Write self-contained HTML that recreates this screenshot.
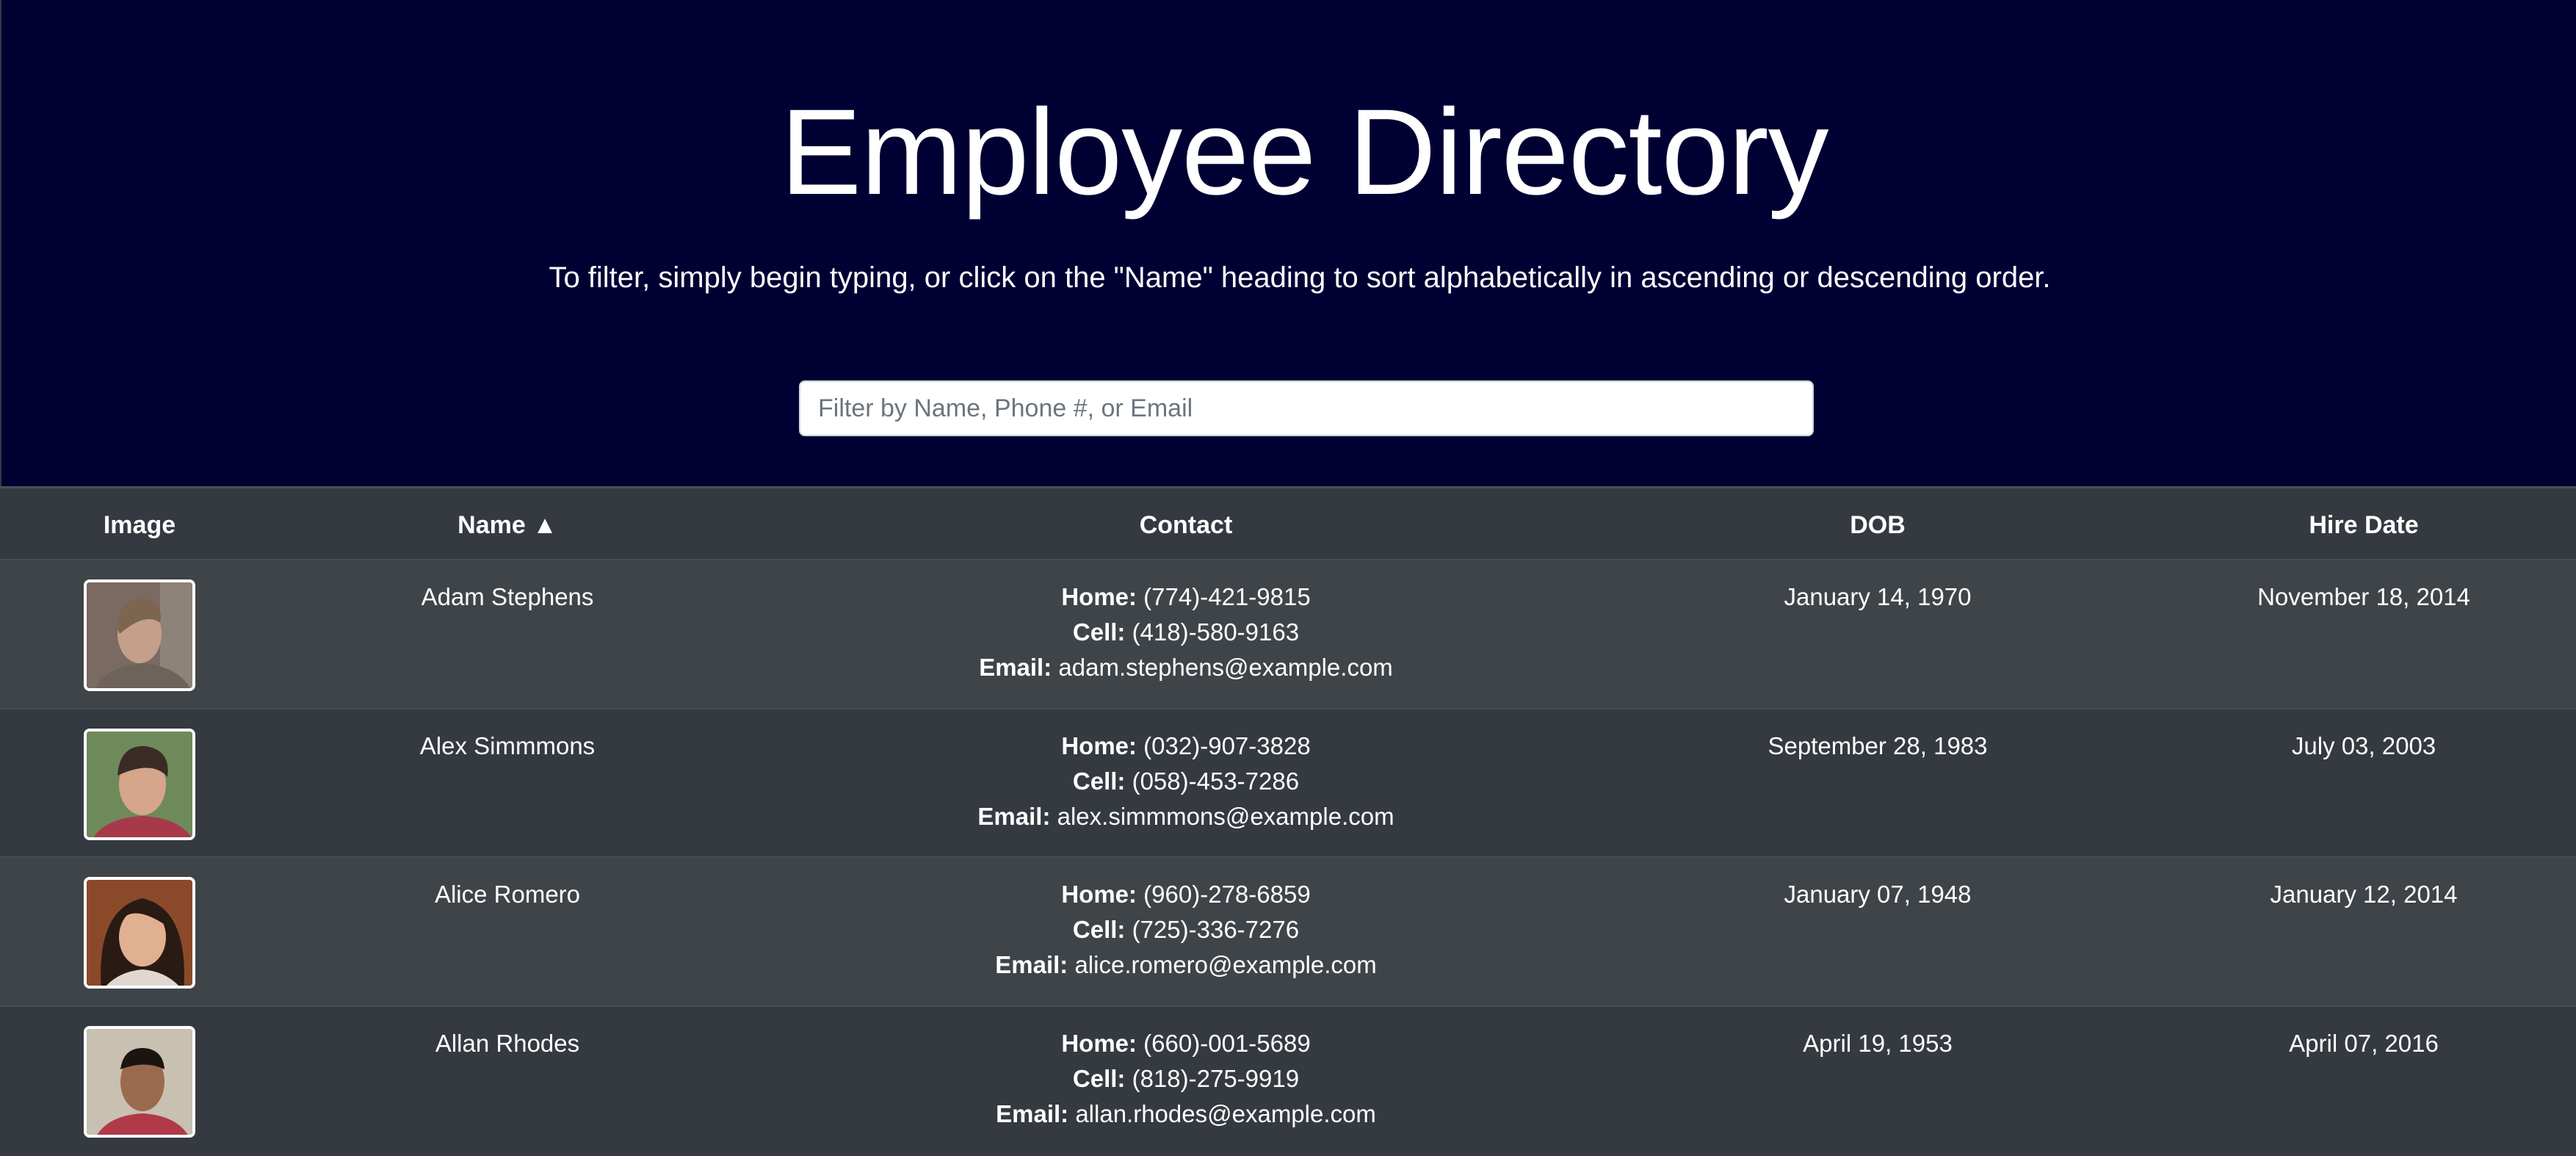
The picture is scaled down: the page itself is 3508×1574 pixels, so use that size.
<!DOCTYPE html>
<html><head><meta charset="utf-8">
<style>
*{margin:0;padding:0;box-sizing:border-box}
html,body{width:3508px;height:1574px;overflow:hidden;background:#343a40;font-family:"Liberation Sans",sans-serif;color:#fff}
.hdr{position:absolute;left:0;top:0;width:3508px;height:662px;background:#000033;border-left:2px solid #333a40}
h1{position:absolute;top:100px;left:20px;width:3508px;text-align:center;font-size:166px;font-weight:normal;line-height:216px;letter-spacing:-1.2px}
.sub{position:absolute;top:350px;left:14px;width:3508px;text-align:center;font-size:40px;line-height:56px}
.inp{position:absolute;left:1086px;top:518px;width:1382px;height:76px;background:#fff;border:2px solid #ced4da;border-radius:8px;color:#6c757d;font-size:34px;line-height:72px;padding-left:24px}
.row{position:absolute;left:0;width:3508px;border-top:2px solid #454d55}
.c{position:absolute;width:1000px;text-align:center;font-size:33px;line-height:48px}
.th{font-weight:bold;font-size:34px}
b{font-weight:bold}
.img{position:absolute;left:114px;width:152px;height:152px;border:4px solid #fff;border-radius:8px;overflow:hidden}
</style></head><body>
<div class="hdr">
<h1>Employee Directory</h1>
<div class="sub">To filter, simply begin typing, or click on the "Name" heading to sort alphabetically in ascending or descending order.</div>
<div class="inp">Filter by Name, Phone #, or Email</div>
</div>
<div class="row" style="top:662px;height:99px;background:#343a40;border-top:3px solid #4a4e55">
<div class="c th" style="left:-310px;top:26px">Image</div>
<div class="c th" style="left:191px;top:26px">Name ▲</div>
<div class="c th" style="left:1115px;top:26px">Contact</div>
<div class="c th" style="left:2057px;top:26px">DOB</div>
<div class="c th" style="left:2719px;top:26px">Hire Date</div>
</div>

<div class="row" style="top:761px;height:203px;background:#3f4449">
<div class="img" style="top:26px"><svg width="152" height="152"><rect width="152" height="152" fill="#7a6a62"/><rect x="100" width="52" height="152" fill="#8d8378"/><path d="M10 152 Q20 115 76 110 Q130 115 145 152Z" fill="#6e635a"/><ellipse cx="72" cy="70" rx="30" ry="40" fill="#c4a08a"/><path d="M40 60 Q45 20 80 22 Q105 28 100 55 Q80 40 45 70Z" fill="#7d6650"/></svg></div>
<div class="c" style="left:191px;top:26px">Adam Stephens</div>
<div class="c" style="left:1115px;top:26px"><b>Home:</b> (774)-421-9815<br><b>Cell:</b> (418)-580-9163<br><b>Email:</b> adam.stephens@example.com</div>
<div class="c" style="left:2057px;top:26px">January 14, 1970</div>
<div class="c" style="left:2719px;top:26px">November 18, 2014</div>
</div>

<div class="row" style="top:964px;height:202px;background:#343a40">
<div class="img" style="top:26px"><svg width="152" height="152"><rect width="152" height="152" fill="#6f8a5a"/><path d="M5 152 Q20 118 76 115 Q132 118 147 152Z" fill="#a63a4a"/><ellipse cx="76" cy="72" rx="32" ry="42" fill="#d5a58c"/><path d="M42 60 Q45 18 80 20 Q115 25 110 62 Q90 38 42 60Z" fill="#3a2c25"/></svg></div>
<div class="c" style="left:191px;top:26px">Alex Simmmons</div>
<div class="c" style="left:1115px;top:26px"><b>Home:</b> (032)-907-3828<br><b>Cell:</b> (058)-453-7286<br><b>Email:</b> alex.simmmons@example.com</div>
<div class="c" style="left:2057px;top:26px">September 28, 1983</div>
<div class="c" style="left:2719px;top:26px">July 03, 2003</div>
</div>

<div class="row" style="top:1166px;height:203px;background:#3f4449">
<div class="img" style="top:26px"><svg width="152" height="152"><rect width="152" height="152" fill="#8a4a2a"/><path d="M20 152 Q12 40 76 25 Q140 40 132 152Z" fill="#2a1a14"/><path d="M20 152 Q40 125 76 122 Q112 125 132 152Z" fill="#e0d8d0"/><ellipse cx="76" cy="78" rx="32" ry="40" fill="#e0b090"/><path d="M44 60 Q60 30 108 62 Q100 30 76 30 Q48 32 44 60Z" fill="#2a1a14"/></svg></div>
<div class="c" style="left:191px;top:26px">Alice Romero</div>
<div class="c" style="left:1115px;top:26px"><b>Home:</b> (960)-278-6859<br><b>Cell:</b> (725)-336-7276<br><b>Email:</b> alice.romero@example.com</div>
<div class="c" style="left:2057px;top:26px">January 07, 1948</div>
<div class="c" style="left:2719px;top:26px">January 12, 2014</div>
</div>

<div class="row" style="top:1369px;height:205px;background:#343a40">
<div class="img" style="top:26px"><svg width="152" height="152"><rect width="152" height="152" fill="#c8c0b0"/><path d="M10 152 Q25 118 76 115 Q127 118 142 152Z" fill="#b03a48"/><ellipse cx="76" cy="72" rx="30" ry="40" fill="#9a6a4e"/><path d="M46 55 Q50 25 78 26 Q104 28 106 55 Q80 42 46 55Z" fill="#1c1410"/></svg></div>
<div class="c" style="left:191px;top:26px">Allan Rhodes</div>
<div class="c" style="left:1115px;top:26px"><b>Home:</b> (660)-001-5689<br><b>Cell:</b> (818)-275-9919<br><b>Email:</b> allan.rhodes@example.com</div>
<div class="c" style="left:2057px;top:26px">April 19, 1953</div>
<div class="c" style="left:2719px;top:26px">April 07, 2016</div>
</div>
</body></html>
